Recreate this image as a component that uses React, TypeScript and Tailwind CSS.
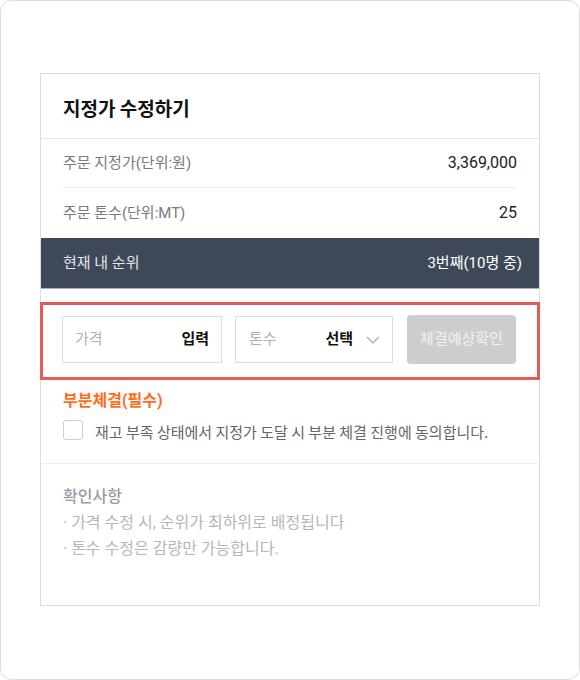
import { useState } from 'react'

const font = "font-['Roboto','Noto_Sans_CJK_KR',sans-serif]"

function InfoRow({ label, value, last }: { label: string; value: string; last?: boolean }) {
  return (
    <div
      className={`flex items-center justify-between ${last ? 'h-[50px]' : 'h-[49px] border-b border-[#eeeeee]'}`}
    >
      <span className="text-[15px] text-[#7a7a7a]">{label}</span>
      <span className="text-[16px] text-[#222222]">{value}</span>
    </div>
  )
}

function App() {
  const [agree, setAgree] = useState(false)

  return (
    <div className={`${font} w-[580px] h-[680px] bg-white`}>
      <div className="h-full rounded-[12px] border border-[#dddddd] pt-[72px] pl-[39px]">
        <div className="w-[500px] border border-[#dddddd] bg-white">
          {/* header */}
          <div className="h-[65px] flex items-center pl-[22px] pt-[4px] border-b border-[#e6e6e6]">
            <h1 className="text-[19px] font-bold text-[#111111] font-['Noto_Sans_CJK_KR',sans-serif]">
              지정가 수정하기
            </h1>
          </div>

          <div className="px-[22px]">
            <InfoRow label="주문 지정가(단위:원)" value="3,369,000" />
            <InfoRow label="주문 톤수(단위:MT)" value="25" last />
          </div>

          <div className="h-[51px] flex items-center justify-between pl-[22px] pr-[17px] bg-[#3e4858] border-b border-[#a9aeb6]">
            <span className="text-[15px] text-[#e4e6ea]">현재 내 순위</span>
            <span className="text-[15px] text-white">3번째(10명 중)</span>
          </div>

          {/* form row */}
          <div className="-mx-px mt-[13px] border-[3px] border-[#e75858] pl-[19px] pt-[11px] pb-[13px] flex gap-[13px]">
            <label className="w-[160px] h-[47px] border border-[#dcdcdc] flex items-center justify-between px-[12px]">
              <span className="text-[15px] text-[#b0b0b8]">가격</span>
              <span className="text-[15px] font-bold text-[#111111]">입력</span>
            </label>
            <div className="w-[158px] h-[47px] border border-[#dcdcdc] flex items-center pl-[13px] pr-[12px]">
              <span className="text-[15px] text-[#b0b0b8]">톤수</span>
              <span className="ml-auto text-[15px] font-bold text-[#111111]">선택</span>
              <svg className="ml-[13px]" width="14" height="8" viewBox="0 0 14 8" fill="none">
                <path d="M1 1l6 6 6-6" stroke="#a8a8b0" strokeWidth="1.2" />
              </svg>
            </div>
            <button
              type="button"
              className="ml-px w-[109px] h-[49px] -mt-px rounded-[4px] bg-[#cdcdcd] text-[15px] text-[#f2f2f2]"
            >
              체결예상확인
            </button>
          </div>

          {/* partial fill */}
          <div className="px-[22px] pt-[10px] pb-[21px] border-b border-[#eeeeee]">
            <div className="text-[16px] font-bold text-[#ff6d1c] leading-[22px]">부분체결(필수)</div>
            <label className="mt-[8px] flex items-start gap-[12px] cursor-pointer">
              <span
                onClick={() => setAgree(!agree)}
                className={`w-[20px] h-[20px] shrink-0 rounded-[3px] border ${agree ? 'border-[#ff6d1c] bg-[#ff6d1c]' : 'border-[#cfcfcf] bg-white'}`}
              />
              <span className="mt-[2px] text-[15px] leading-[20px] text-[#666666] font-['Noto_Sans_CJK_KR',sans-serif]">
                재고 부족 상태에서 지정가 도달 시 부분 체결 진행에 동의합니다.
              </span>
            </label>
          </div>

          {/* notes */}
          <div className="px-[22px] pt-[20px] pb-[43px] leading-[26px]">
            <div className="text-[16px] font-medium text-[#9a9aa6]">확인사항</div>
            <div className="text-[16px] text-[#b5b5c0]">· 가격 수정 시, 순위가 최하위로 배정됩니다</div>
            <div className="text-[16px] text-[#b5b5c0]">· 톤수 수정은 감량만 가능합니다.</div>
          </div>
        </div>
      </div>
    </div>
  )
}

export default App
